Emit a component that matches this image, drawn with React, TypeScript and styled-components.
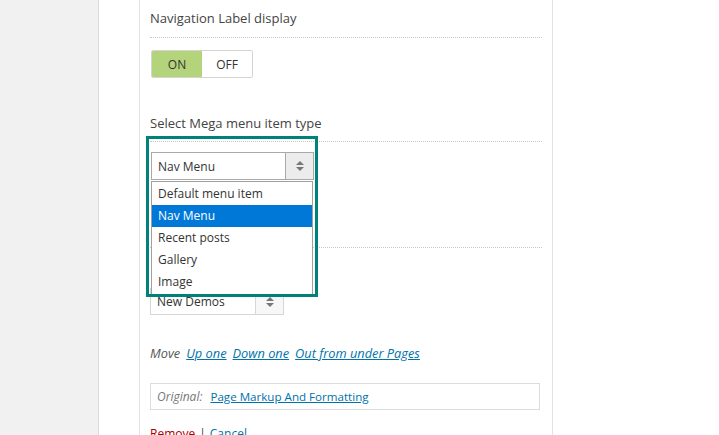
import styled, { createGlobalStyle } from "styled-components"

const GlobalStyle = createGlobalStyle`
    html, body {
        margin: 0;
        padding: 0;
        background: #fff;
    }
    body {
        font-family: "Open Sans", "Noto Sans", sans-serif;
        font-size: 12px;
        color: #444;
    }
`

const navTypes = ["Default menu item", "Nav Menu", "Recent posts", "Gallery", "Image"]

const SelectArrows = () => (
    <svg width="10" height="12" viewBox="0 0 10 12">
        <path d="M5 1 L9 5 L1 5 Z" fill="#777" />
        <path d="M5 11 L9 7 L1 7 Z" fill="#777" />
    </svg>
)

export default function App() {
    return (
        <>
            <GlobalStyle />
            <Page>
                <Sidebar />
                <Gutter />
                <Panel>
                    <Label $top={8}>Navigation Label display</Label>
                    <Divider $gap={9} />
                    <Toggle>
                        <ToggleOption $active>ON</ToggleOption>
                        <ToggleOption>OFF</ToggleOption>
                    </Toggle>

                    <Label $top={35}>Select Mega menu item type</Label>
                    <Divider $gap={8} />
                    <SelectWrap $top={10} $width={163}>
                        <SelectBox $width={163}>
                            <span>Nav Menu</span>
                            <ArrowPart>
                                <SelectArrows />
                            </ArrowPart>
                        </SelectBox>
                        <Dropdown>
                            {navTypes.map((t) => (
                                <Option key={t} $selected={t === "Nav Menu"}>
                                    {t}
                                </Option>
                            ))}
                        </Dropdown>
                        <Highlight />
                    </SelectWrap>

                    <Divider $gap={67} />
                    <SelectWrap $top={40} $width={134} $shift={-1}>
                        <SelectBox $width={134} $muted>
                            <span>New Demos</span>
                            <ArrowPart $muted>
                                <SelectArrows />
                            </ArrowPart>
                        </SelectBox>
                    </SelectWrap>

                    <MoveRow>
                        <em>Move</em>
                        <Link href="#">Up one</Link>
                        <Link href="#">Down one</Link>
                        <Link href="#">Out from under Pages</Link>
                    </MoveRow>

                    <OriginalBox>
                        <em>Original:</em>
                        <Link href="#" $plain>Page Markup And Formatting</Link>
                    </OriginalBox>

                    <Actions>
                        <DangerLink href="#">Remove</DangerLink>
                        <Sep>|</Sep>
                        <Link href="#" $plain>Cancel</Link>
                    </Actions>
                </Panel>
            </Page>
        </>
    )
}

// Styled components
const Page = styled.div`
    display: flex;
    height: 435px;
    overflow: hidden;
`

const Sidebar = styled.div`
    width: 98px;
    flex-shrink: 0;
    background: #f1f1f1;
    border-right: 1px solid #dcdcdc;
`

const Gutter = styled.div`
    width: 40px;
    flex-shrink: 0;
`

const Panel = styled.div`
    width: 392px;
    flex-shrink: 0;
    padding: 0 10px;
    border-left: 1px solid #e2e2e2;
    border-right: 1px solid #e2e2e2;
`

const Label = styled.div<{ $top: number }>`
    margin-top: ${(p) => p.$top}px;
    height: 20px;
    line-height: 20px;
    font-size: 13px;
    color: #444;
`

const Divider = styled.div<{ $gap: number }>`
    margin-top: ${(p) => p.$gap}px;
    border-bottom: 1px dotted #c8c8c8;
`

const Toggle = styled.div`
    display: inline-flex;
    margin-top: 12px;
    margin-left: 1px;
    height: 26px;
    border: 1px solid #d4d4d4;
    border-radius: 2px;
    overflow: hidden;
`

const ToggleOption = styled.div<{ $active?: boolean }>`
    width: 50px;
    display: flex;
    align-items: center;
    justify-content: center;
    font-size: 12px;
    color: #333;
    background: ${(p) => (p.$active ? "#b4d47c" : "#fff")};
`

const SelectWrap = styled.div<{ $top: number; $width: number; $shift?: number }>`
    position: relative;
    width: ${(p) => p.$width}px;
    margin-top: ${(p) => p.$top}px;
    margin-left: ${(p) => 1 + (p.$shift ?? 0)}px;
`

const SelectBox = styled.div<{ $width: number; $muted?: boolean }>`
    box-sizing: border-box;
    width: ${(p) => p.$width}px;
    height: ${(p) => (p.$muted ? 27 : 28)}px;
    display: flex;
    align-items: center;
    justify-content: space-between;
    border: 1px solid ${(p) => (p.$muted ? "#d6d6d6" : "#a9a9a9")};
    background: #fff;
    font-size: 12px;
    color: #333;

    span {
        padding-left: 6px;
    }
`

const ArrowPart = styled.div<{ $muted?: boolean }>`
    width: 27px;
    height: 100%;
    display: flex;
    align-items: center;
    justify-content: center;
    border-left: 1px solid ${(p) => (p.$muted ? "#d6d6d6" : "#a9a9a9")};
    background: ${(p) => (p.$muted ? "#f7f7f7" : "#ececec")};
`

const Dropdown = styled.ul`
    position: absolute;
    top: 29px;
    left: 0;
    width: 162px;
    box-sizing: border-box;
    margin: 0;
    padding: 1px 0;
    list-style: none;
    background: #fff;
    border: 1px solid #a0a0a0;
    z-index: 2;
`

const Option = styled.li<{ $selected?: boolean }>`
    height: 22px;
    line-height: 22px;
    padding-left: 6px;
    font-size: 12px;
    color: ${(p) => (p.$selected ? "#fff" : "#333")};
    background: ${(p) => (p.$selected ? "#0078d7" : "transparent")};
`

const Highlight = styled.div`
    position: absolute;
    left: -5px;
    top: -16px;
    width: 172px;
    height: 161px;
    box-sizing: border-box;
    border: 3px solid #00817a;
    z-index: 3;
    pointer-events: none;
`

const MoveRow = styled.div`
    margin-top: 28px;
    height: 20px;
    display: flex;
    align-items: center;
    gap: 6px;
    font-size: 12.8px;

    em {
        color: #555;
    }
    a {
        font-style: italic;
    }
`

const Link = styled.a<{ $plain?: boolean }>`
    color: #0073aa;
    text-decoration: underline;
    font-style: ${(p) => (p.$plain ? "normal" : "italic")};
`

const OriginalBox = styled.div`
    margin-top: 20px;
    width: 382px;
    height: 25px;
    display: flex;
    align-items: center;
    gap: 8px;
    padding-left: 6px;
    border: 1px solid #dcdcdc;
    font-size: 11.6px;

    em {
        color: #777;
        font-size: 12px;
    }
`

const Actions = styled.div`
    margin-top: 15px;
    display: flex;
    align-items: center;
    gap: 4px;
    font-size: 12px;
`

const DangerLink = styled.a`
    color: #a00;
    text-decoration: underline;
`

const Sep = styled.span`
    color: #444;
`
